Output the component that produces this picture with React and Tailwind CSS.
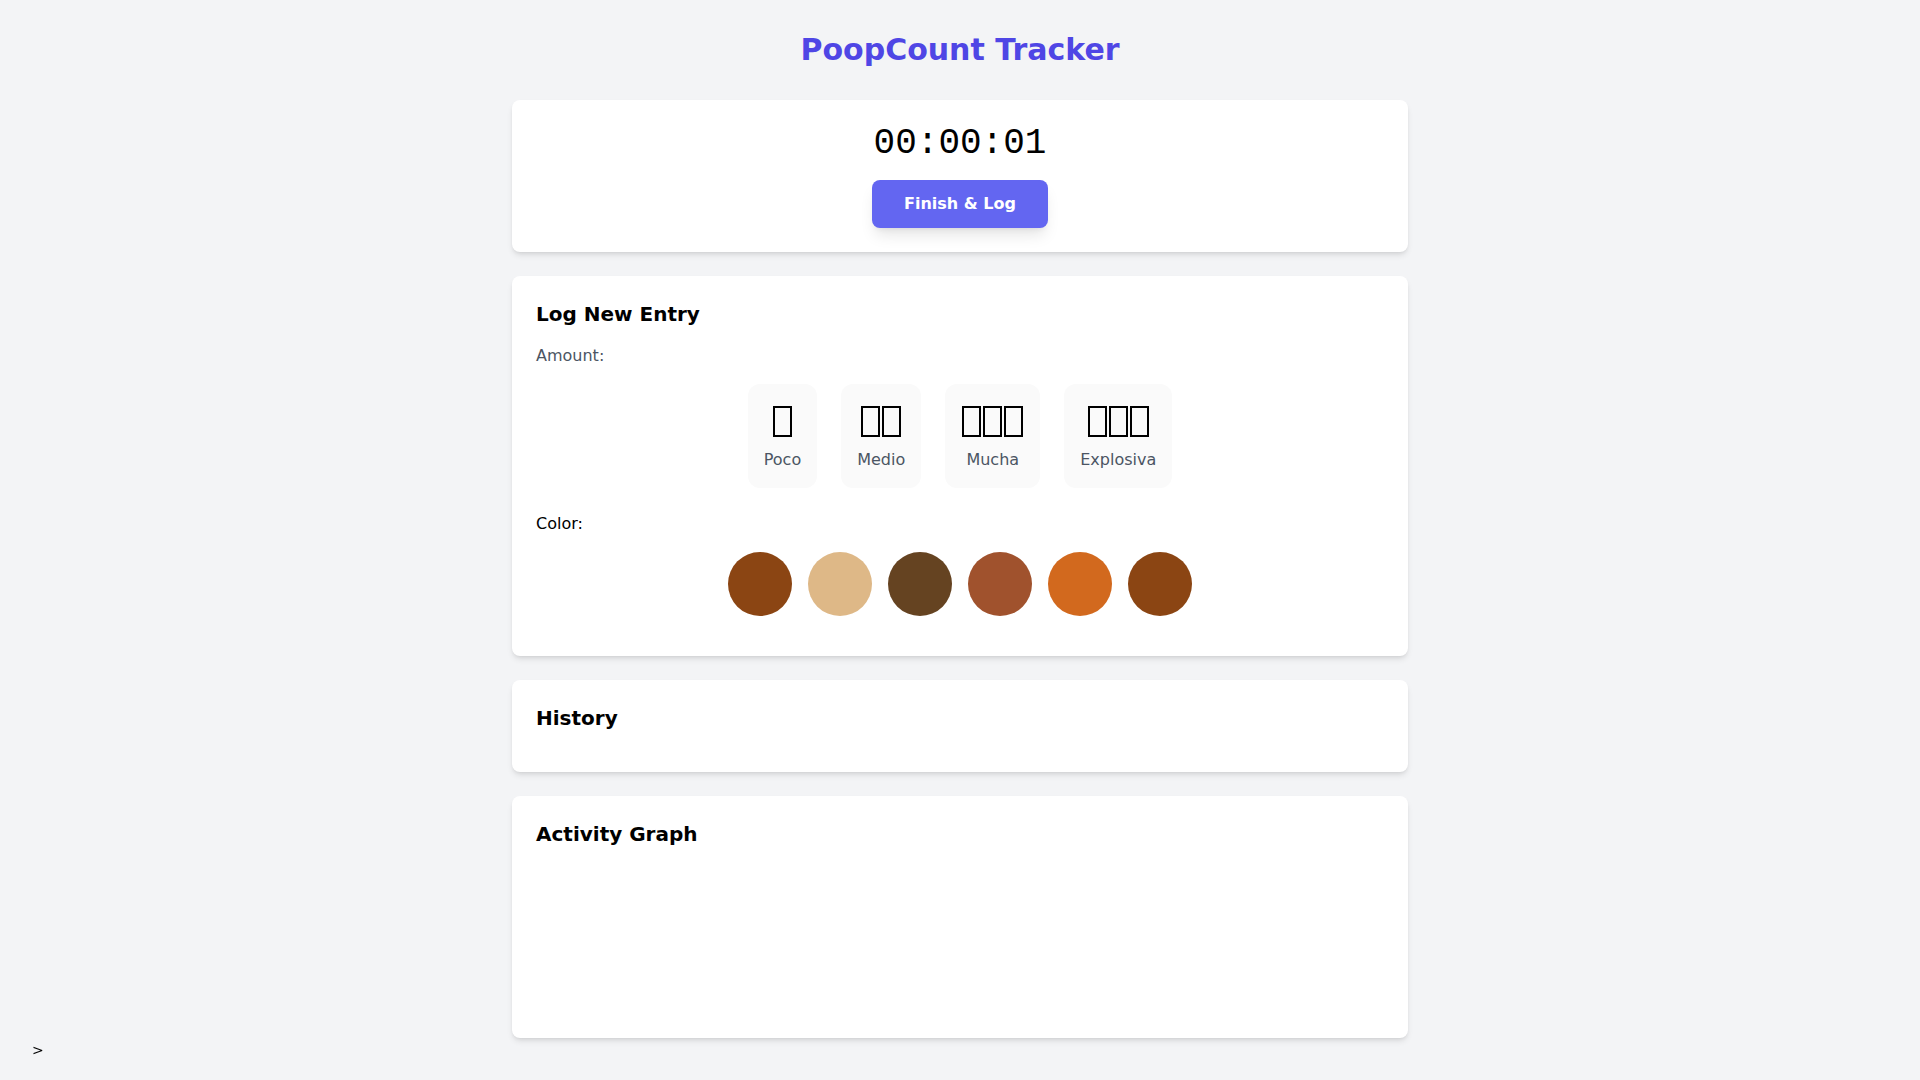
import React from "react";

const amounts = [
  { count: 1, label: "Poco" },
  { count: 2, label: "Medio" },
  { count: 3, label: "Mucha" },
  { count: 3, label: "Explosiva" },
];

const colors = ["#8B4513", "#DEB887", "#654321", "#A0522D", "#D2691E", "#8B4513"];

function Tofu() {
  return <span className="mx-px inline-block h-[31px] w-[19px] border-2 border-black" />;
}

export default function App() {
  return (
    <div className="min-h-screen bg-[#f3f4f6] px-8 py-8 font-['DejaVu_Sans',sans-serif] text-black">
      <h1 className="mb-8 text-center text-3xl font-bold leading-9 text-[#4f46e5]">
        PoopCount Tracker
      </h1>

      <div className="mx-auto flex max-w-4xl flex-col gap-6">
        <div className="flex flex-col items-center rounded-lg bg-white p-6 shadow-md">
          <div className="mb-4 font-['Liberation_Mono',monospace] text-4xl leading-10">00:00:01</div>
          <button className="rounded-lg bg-[#6366f1] px-8 py-3 text-base font-bold leading-6 text-white shadow-lg">
            Finish &amp; Log
          </button>
        </div>

        <div className="rounded-lg bg-white p-6 shadow-md">
          <h2 className="mb-4 text-xl font-bold leading-7">Log New Entry</h2>
          <div className="mb-4 text-base leading-6 text-[#4b5563]">Amount:</div>
          <div className="mb-6 flex justify-center gap-6">
            {amounts.map((a) => (
              <button key={a.label} className="flex flex-col items-center rounded-xl bg-[#fafafa] px-4 py-4">
                <span className="mb-2 flex h-10 items-start pt-[6px]">
                  {Array.from({ length: a.count }).map((_, i) => (
                    <Tofu key={i} />
                  ))}
                </span>
                <span className="text-base leading-6 text-[#4b5563]">{a.label}</span>
              </button>
            ))}
          </div>
          <div className="mb-4 text-base leading-6">Color:</div>
          <div className="mb-4 flex justify-center gap-4">
            {colors.map((c, i) => (
              <button key={i} className="h-16 w-16 rounded-full" style={{ backgroundColor: c }} />
            ))}
          </div>
        </div>

        <div className="rounded-lg bg-white p-6 shadow-md">
          <h2 className="mb-4 text-xl font-bold leading-7">History</h2>
        </div>

        <div className="rounded-lg bg-white p-6 shadow-md">
          <h2 className="mb-4 text-xl font-bold leading-7">Activity Graph</h2>
          <div className="h-[150px]" />
        </div>
      </div>

      <div className="fixed bottom-5 left-8 text-sm leading-5">&gt;</div>
    </div>
  );
}
